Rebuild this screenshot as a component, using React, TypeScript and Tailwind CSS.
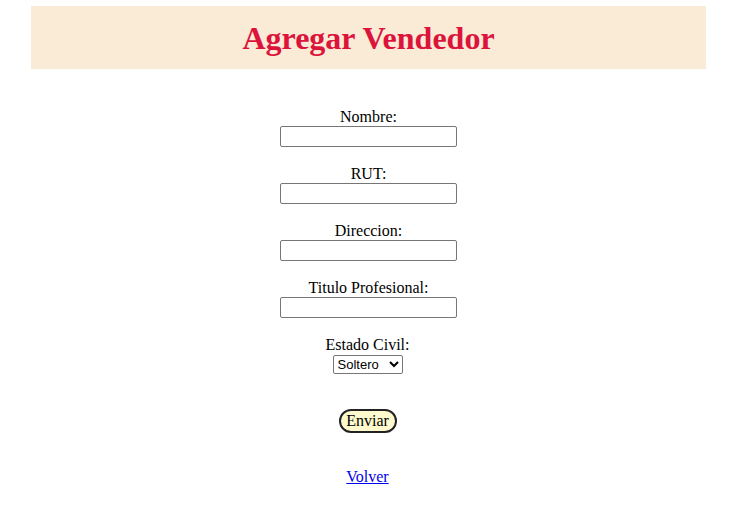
import { useState } from "react";

const campos = ["Nombre:", "RUT:", "Direccion:", "Titulo Profesional:"];

export default function App() {
  const [estado, setEstado] = useState("Soltero");

  return (
    <div className="min-h-screen bg-white font-['Liberation_Serif',serif] text-[16px] text-black">
      {/* Header */}
      <div className="mx-auto mt-[6px] flex h-[63px] w-[675px] items-center justify-center bg-[#faebd7] translate-x-[1px]">
        <h1 className="text-[32px] font-bold leading-none text-[#dc143c]">Agregar Vendedor</h1>
      </div>

      <form className="flex flex-col items-center pt-[39px]" onSubmit={(e) => e.preventDefault()}>
        {campos.map((c) => (
          <div key={c} className="mb-[18px] ml-[2px] flex flex-col items-center">
            <label className="block leading-[18px]">{c}</label>
            <input
              type="text"
              className="h-[21px] w-[177px] rounded-[2px] border border-[#767676] bg-white px-[2px] text-[13px] outline-none"
            />
          </div>
        ))}

        {/* Estado civil */}
        <div className="flex flex-col items-center">
          <label className="block leading-[18px]">Estado Civil:</label>
          <select
            value={estado}
            onChange={(e) => setEstado(e.target.value)}
            className="mt-[1px] h-[19px] w-[70px] rounded-[2px] border border-[#767676] bg-white font-['Liberation_Sans',Arial,sans-serif] text-[13px] text-black"
          >
            <option>Soltero</option>
            <option>Casado</option>
            <option>Divorciado</option>
            <option>Viudo</option>
          </select>
        </div>

        <button
          type="submit"
          className="mt-[35px] h-[24px] w-[58px] rounded-full border-2 border-[#222] bg-[#fffacd] leading-none"
        >
          Enviar
        </button>

        <a href="#" className="mt-[35px] leading-[18px] text-[#0000ee] underline">
          Volver
        </a>
      </form>
    </div>
  );
}
